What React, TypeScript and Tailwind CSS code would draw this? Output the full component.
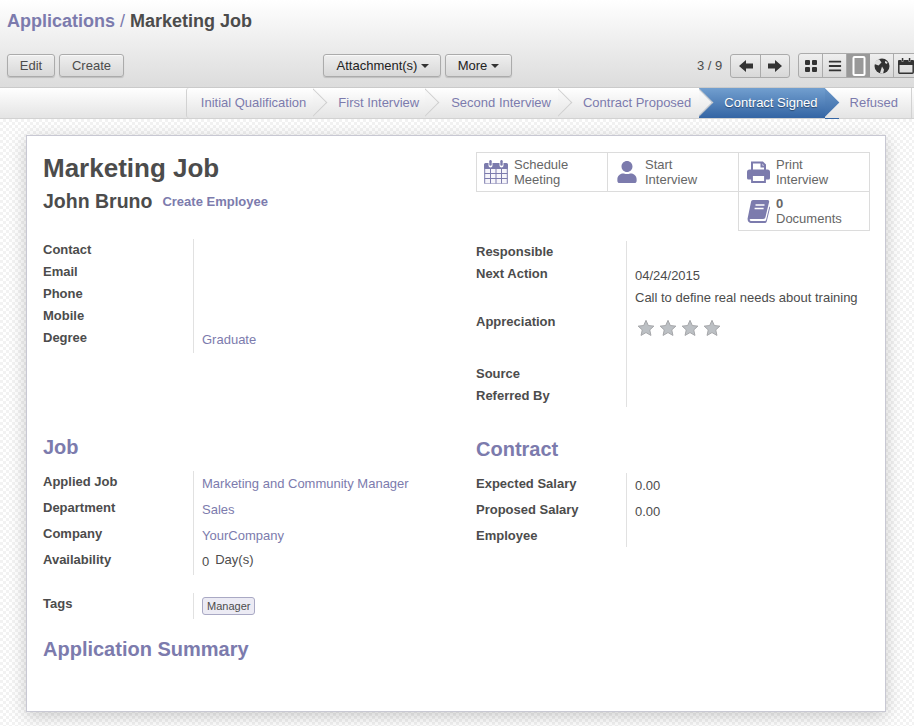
import React from "react";
import { FaUser, FaBars } from "react-icons/fa";

const Calendar = () => (
  <svg width="24" height="24" viewBox="0 0 24 24">
    <path fill="#7c7bad" d="M1.500 3H4.500v2.500a2 2 0 0 0 4 0V3h7v2.500a2 2 0 0 0 4 0V3h3A1.500 1.500 0 0 1 24 4.500V9H0V4.500A1.500 1.500 0 0 1 1.500 3z" />
    <rect x="5.300" y="0" width="2.400" height="5.800" rx="1.200" fill="#7c7bad" />
    <rect x="16.300" y="0" width="2.400" height="5.800" rx="1.200" fill="#7c7bad" />
    <path stroke="#7c7bad" strokeWidth="1" fill="#f6f5fa" d="M.7 8.500h22.600v14.800a.7.7 0 0 1-.7.700H1.400a.7.700 0 0 1-.7-.700z" />
    <path stroke="#7c7bad" strokeWidth="1" fill="none" d="M.7 13.500h22.600M.7 18.500h22.600M6.500 8.500v15M12 8.500v15M17.500 8.500v15" />
  </svg>
);

const ViewCalendar = () => (
  <svg width="16" height="16" viewBox="0 0 16 16">
    <path fill="#333" d="M1 2h2.500v1.500h2V2h5v1.500h2V2H15a1 1 0 0 1 1 1v4H0V3a1 1 0 0 1 1-1z" />
    <rect x="3.800" y="0" width="1.500" height="3" fill="#333" />
    <rect x="10.800" y="0" width="1.500" height="3" fill="#333" />
    <path stroke="#333" strokeWidth="1.500" fill="none" d="M.8 6v8.200a1 1 0 0 0 1 1h12.400a1 1 0 0 0 1-1V6" />
  </svg>
);

const Squares = () => (
  <svg width="12" height="12" viewBox="0 0 12 12">
    <rect x="0" y="0" width="5" height="5" rx="1" fill="#333" />
    <rect x="7" y="0" width="5" height="5" rx="1" fill="#333" />
    <rect x="0" y="7" width="5" height="5" rx="1" fill="#333" />
    <rect x="7" y="7" width="5" height="5" rx="1" fill="#333" />
  </svg>
);

const Printer = () => (
  <svg width="23" height="22" viewBox="0 0 23 22">
    <path fill="none" stroke="#7c7bad" strokeWidth="2" d="M5 10V1.500h10.500L18 4v6" />
    <path fill="#7c7bad" d="M13.500 1h2v3.500H19v2h-5.500z" />
    <path fill="#7c7bad" d="M2.500 8.500h18A2.500 2.500 0 0 1 23 11v6a1.500 1.500 0 0 1-1.500 1.500H1.500A1.500 1.500 0 0 1 0 17v-6a2.500 2.500 0 0 1 2.500-2.500z" />
    <path fill="#fff" stroke="#7c7bad" strokeWidth="1.800" d="M5 14h13v7H5z" />
  </svg>
);

const Book = () => (
  <svg width="23" height="24" viewBox="0 0 23 24">
    <path fill="#7c7bad" d="M6 1h14.500c1.200 0 1.900 1 1.600 2.100l-3.600 15c-.3 1.200-1 1.900-2.300 1.900H4c-1 0-1.500.6-1.300 1 .2.500.7.900 1.500.9h13.600c.7 0 1.100-.3 1.300-1l3.300-13.500c.5.300.8.900.6 1.600l-3.300 13.400c-.3 1-1.200 1.600-2.200 1.600H3.600C1.700 24 .3 21.500.6 19.500L4 3c.2-1.100 1-2 2-2z" />
    <path stroke="#fff" strokeWidth="1.300" d="M8.500 6h9M7.600 9.500h9" />
  </svg>
);

const Star = () => (
  <svg width="18" height="18" viewBox="0 0 24 24">
    <path fill="#bcc0c4" stroke="#a3a5a8" strokeWidth="1.300" d="M12 1.800l3.100 6.900 7.400.8-5.500 5 1.600 7.400-6.600-3.800-6.600 3.800L7 14.500l-5.500-5 7.400-.8z" />
  </svg>
);

const Tablet = () => (
  <svg width="14" height="20" viewBox="0 0 14 20">
    <rect x="1.500" y="1" width="11" height="18" rx="1" fill="#999" stroke="#fff" strokeWidth="2" />
  </svg>
);

const Globe = () => (
  <svg width="16" height="16" viewBox="0 0 16 16">
    <circle cx="8" cy="8" r="7.500" fill="#333" />
    <path fill="#dedede" d="M7.500 4.500L5 1 1 3.500 .5 6l4 1.500zM8 8.500L6 15l3 .8 1-4z" />
    <path fill="#dedede" d="M11 3l2.500 1-.5 2-2-1z" />
  </svg>
);

const ArrowLeft = () => (
  <svg width="14" height="14" viewBox="0 0 14 14"><path fill="#333" d="M0 7l7-6v3.500h7v5H7V13z" /></svg>
);
const ArrowRight = () => (
  <svg width="14" height="14" viewBox="0 0 14 14"><path fill="#333" d="M14 7L7 1v3.500H0v5h7V13z" /></svg>
);

const Caret = () => <span className="ml-[4px] inline-block h-0 w-0 border-x-[4px] border-t-[4px] border-x-transparent border-t-[#333] align-[2px]" />;

const Btn = ({ children, cls = "" }: { children: React.ReactNode; cls?: string }) => (
  <button className={`h-[23px] shrink-0 whitespace-nowrap rounded-[3px] border border-[#ababab] bg-gradient-to-b from-[#efefef] to-[#d8d8d8] text-[13px] leading-[21px] shadow-[0_1px_1px_rgba(0,0,0,0.15),inset_0_1px_0_rgba(255,255,255,0.6)] ${cls}`}>
    {children}
  </button>
);

const steps = [
  { t: "Initial Qualification", c: "pl-[14px] pr-[7px] border-l border-[#d2d2d2] rounded-l-[3px]" },
  { t: "First Interview", c: "pl-[25px] pr-[6px]" },
  { t: "Second Interview", c: "pl-[26px] pr-[7px]" },
  { t: "Contract Proposed", c: "pl-[25px] pr-[8px]" },
];

const Chevron = () => (
  <span className="absolute left-full top-0 z-10 h-[30px] w-[16px] overflow-hidden">
    <span className="absolute left-[-11px] top-[4px] block h-[21px] w-[21px] rotate-45 border-r border-t border-[#cfcfcf] bg-gradient-to-br from-[#fcfcfc] to-[#e6e6e6]" />
  </span>
);

const Step = ({ t, c }: { t: string; c: string }) => (
  <div className={`relative flex h-[30px] shrink-0 items-center whitespace-nowrap text-[#7c7bad] ${c}`}>
    {t}
    <Chevron />
  </div>
);

const Label = ({ children }: { children: React.ReactNode }) => <span className="font-bold text-[#4c4c4c]">{children}</span>;
const Link = ({ children }: { children: React.ReactNode }) => <span className="text-[#7c7bad]">{children}</span>;

const Row = ({ label, h = "h-[22px]", children }: { label: string; h?: string; children?: React.ReactNode }) => (
  <div className={`flex ${h}`}>
    <div className="w-[150px] shrink-0 pt-[2px] leading-[18px]">
      <Label>{label}</Label>
    </div>
    <div className="flex-1 border-l border-[#e1e1e1] pl-[8px] pt-[4px] leading-[18px]">{children}</div>
  </div>
);

const SmartBtn = ({ icon, top, bottom, cls = "", topBold = false }: { icon: React.ReactNode; top: string; bottom: string; cls?: string; topBold?: boolean }) => (
  <div className={`flex h-[40px] w-[132px] shrink-0 items-center border border-[#dcdcdc] text-[13px] leading-[15px] text-[#666] ${cls}`}>
    <div className="flex w-[37px] shrink-0 justify-center pl-[1px]">{icon}</div>
    <div>
      <div className={topBold ? "font-bold" : ""}>{top}</div>
      <div>{bottom}</div>
    </div>
  </div>
);

export default function App() {
  return (
    <div className="flex h-[726px] w-full flex-col overflow-hidden bg-white font-['Liberation_Sans',Arial,sans-serif] text-[13px] text-[#4c4c4c]">
      <header className="h-[88px] shrink-0 overflow-hidden border-b border-[#cacaca] bg-gradient-to-b from-white to-[#dcdcdc] pl-[7px]">
        <h1 className="pt-[9px] text-[18px] font-bold leading-[24px]">
          <span className="text-[#7c7bad]">Applications</span>
          <span className="font-normal text-[#7c7bad]"> / </span>
          <span>Marketing Job</span>
        </h1>
        <div className="mt-[20px] flex h-[25px] items-center">
          <Btn cls="w-[48px] text-[#4c4c4c]">Edit</Btn>
          <Btn cls="ml-[4px] w-[65px] text-[#4c4c4c]">Create</Btn>
          <Btn cls="ml-[199px] w-[118px] pl-[2px] text-[#222]">Attachment(s)<Caret /></Btn>
          <Btn cls="ml-[4px] w-[67px] text-[#222]">More<Caret /></Btn>
          <span className="ml-[185px] shrink-0 whitespace-nowrap text-[#4c4c4c]">3 / 9</span>
          <div className="ml-[8px] flex h-[24px] w-[60px] shrink-0 rounded-[3px] border border-[#ababab] bg-gradient-to-b from-[#efefef] to-[#d8d8d8]">
            <div className="flex flex-1 items-center justify-center border-r border-[#ababab]"><ArrowLeft /></div>
            <div className="flex flex-1 items-center justify-center"><ArrowRight /></div>
          </div>
          <div className="ml-[8px] flex h-[25px] w-[130px] shrink-0 rounded-[3px] border border-[#ababab] bg-gradient-to-b from-[#efefef] to-[#d8d8d8]">
            <div className="flex w-[24px] items-center justify-center border-r border-[#ababab]"><Squares /></div>
            <div className="flex w-[24px] items-center justify-center border-r border-[#ababab]"><FaBars size={14} color="#333" /></div>
            <div className="flex w-[23px] items-center justify-center bg-[#999]"><Tablet /></div>
            <div className="flex w-[24px] items-center justify-center border-r border-[#ababab]"><Globe /></div>
            <div className="flex w-[24px] items-center justify-center"><ViewCalendar /></div>
          </div>
        </div>
      </header>

      <div className="flex h-[31px] shrink-0 justify-end border-b border-[#d2d2d2] bg-gradient-to-b from-white to-[#e4e4e4] pr-[2px]">
        {steps.map((s) => (
          <Step key={s.t} t={s.t} c={s.c} />
        ))}
        <div className="relative z-[5] flex h-[30px] shrink-0 items-center whitespace-nowrap bg-gradient-to-b from-[#729fcf] to-[#3465a4] pl-[25px] pr-[7px] text-white [text-shadow:0_1px_1px_rgba(0,0,0,0.4)]">
          Contract Signed
          <span className="absolute left-full top-0 h-[30px] w-[16px] overflow-hidden">
            <span className="absolute left-[-11px] top-[4px] block h-[21px] w-[21px] rotate-45 bg-gradient-to-br from-[#6a97c8] to-[#3a6aa8]" />
          </span>
          <span className="absolute left-full top-[30px] h-px w-[14px] bg-[#3465a4]" />
        </div>
        <div className="flex h-[30px] shrink-0 items-center border-r border-[#d2d2d2] pl-[25px] pr-[13px] text-[#7c7bad]">Refused</div>
      </div>

      <main className="flex-1 bg-[repeating-conic-gradient(#f2f2f2_0_25%,#fff_0_50%)] bg-[length:6px_6px] px-[26px] pt-[16px]">
        <section className="h-[577px] w-[860px] border border-[#c8c8d3] bg-white pl-[16px] pr-[15px] shadow-[0_4px_16px_rgba(0,0,0,0.2)]">
          <div className="flex">
            <div className="w-[433px] shrink-0">
              <h1 className="pt-[16px] text-[26px] font-bold leading-[32px]">Marketing Job</h1>
              <div className="mt-[5px] flex items-baseline">
                <span className="text-[19.5px] font-bold leading-[24px]">John Bruno</span>
                <span className="relative -top-[2px] ml-[10px] font-bold text-[#7c7bad]">Create Employee</span>
              </div>
            </div>
            <div className="flex w-[394px] flex-wrap justify-end pt-[16px]">
              <SmartBtn icon={<Calendar />} top="Schedule" bottom="Meeting" />
              <SmartBtn icon={<FaUser size={22} color="#7c7bad" />} top="Start" bottom="Interview" cls="-ml-px" />
              <SmartBtn icon={<Printer />} top="Print" bottom="Interview" cls="-ml-px" />
              <SmartBtn icon={<Book />} top="0" bottom="Documents" cls="-mt-px" topBold />
            </div>
          </div>

          <div className="flex">
            <div className="w-[433px] shrink-0">
              <div className="mt-[8px] w-[372px]">
                <Row label="Contact" />
                <Row label="Email" />
                <Row label="Phone" />
                <Row label="Mobile" />
                <Row label="Degree" h="h-[26px]"><Link>Graduate</Link></Row>
              </div>
              <h2 className="mt-[81px] text-[20px] font-bold leading-[26px] text-[#7c7bad]">Job</h2>
              <div className="mt-[11px] w-[372px]">
                <Row label="Applied Job" h="h-[26px]"><Link>Marketing and Community Manager</Link></Row>
                <Row label="Department" h="h-[26px]"><Link>Sales</Link></Row>
                <Row label="Company" h="h-[26px]"><Link>YourCompany</Link></Row>
                <Row label="Availability" h="h-[26px]"><span>0</span><span className="relative -top-[2px] ml-[6px]">Day(s)</span></Row>
              </div>
              <div className="mt-[18px] w-[372px]">
                <Row label="Tags" h="h-[26px]">
                  <span className="inline-block h-[18px] rounded-[3px] border border-[#a9a9c4] bg-[#ecebf4] px-[4px] text-[11px] leading-[16px]">Manager</span>
                </Row>
              </div>
              <h2 className="mt-[17px] text-[20px] font-bold leading-[26px] text-[#7c7bad]">Application Summary</h2>
            </div>

            <div className="w-[394px]">
              <div className="mt-[10px]">
                <Row label="Responsible" />
                <Row label="Next Action" h="h-[48px]">
                  <div className="leading-[18px]">04/24/2015</div>
                  <div className="mt-[4px] whitespace-nowrap leading-[18px]">Call to define real needs about training</div>
                </Row>
                <Row label="Appreciation" h="h-[52px]">
                  <div className="ml-[2px] mt-[4px] flex gap-[4px]"><Star /><Star /><Star /><Star /></div>
                </Row>
                <Row label="Source" />
                <Row label="Referred By" />
              </div>
              <h2 className="mt-[29px] text-[20px] font-bold leading-[26px] text-[#7c7bad]">Contract</h2>
              <div className="mt-[11px]">
                <Row label="Expected Salary" h="h-[26px]">0.00</Row>
                <Row label="Proposed Salary" h="h-[26px]">0.00</Row>
                <Row label="Employee" h="h-[22px]" />
              </div>
            </div>
          </div>
        </section>
      </main>
    </div>
  );
}
